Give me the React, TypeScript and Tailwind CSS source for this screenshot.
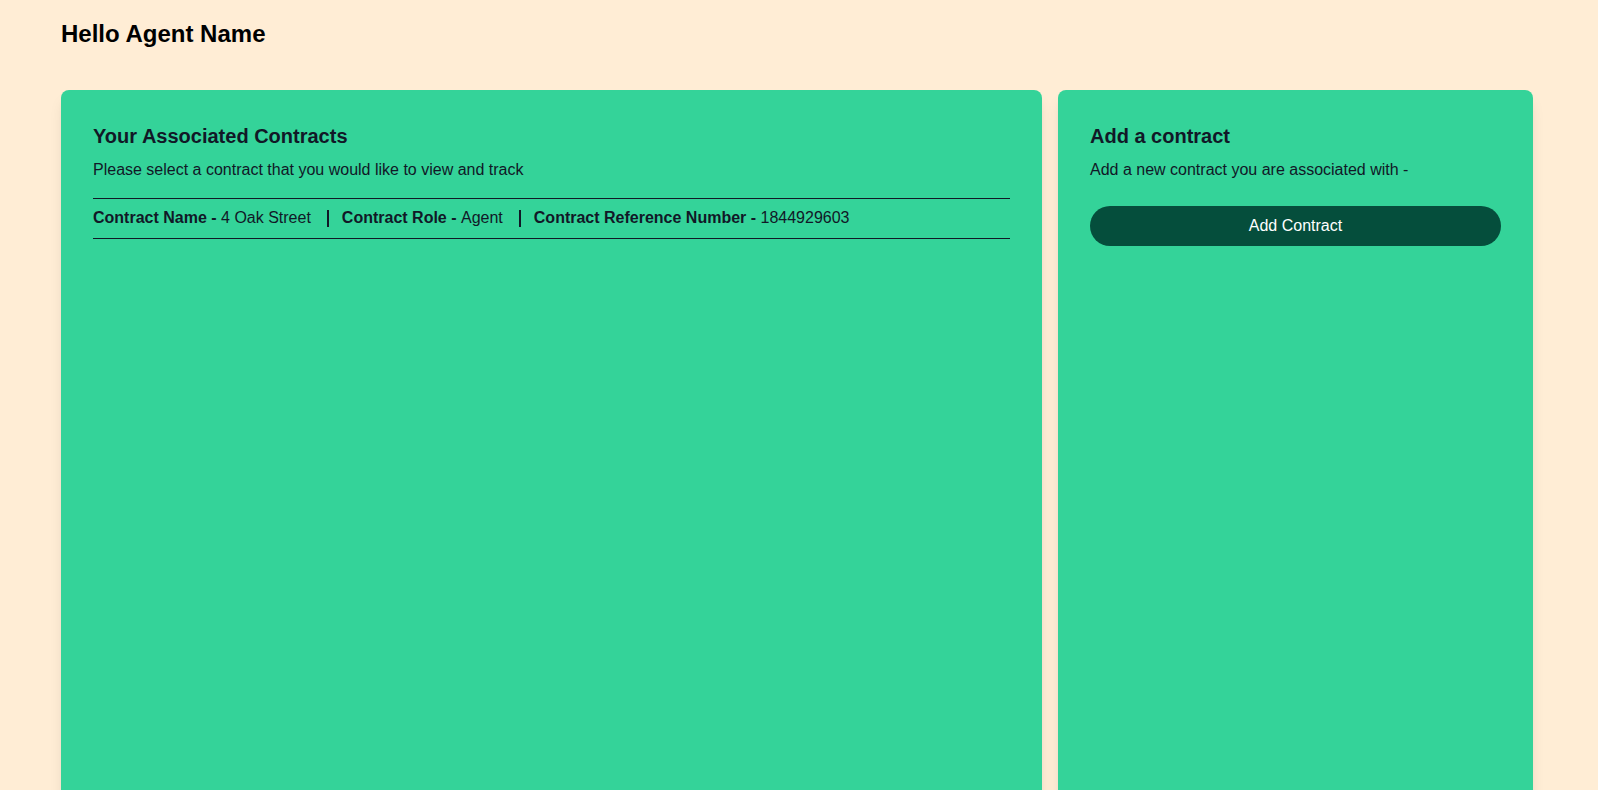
import React from "react";

function Sep() {
  return <span className="ml-[16px] mr-[13px] inline-block h-[17px] w-[2px] bg-[#111827] align-[-4px]" />;
}

export default function App() {
  return (
    <div
      className="h-[790px] overflow-hidden bg-[#ffedd5] px-[61px] pt-[18px]"
      style={{ fontFamily: '"Liberation Sans", Arial, sans-serif' }}
    >
      <h1 className="text-2xl leading-8 font-bold text-black">Hello Agent Name</h1>
      <div className="mt-10 flex gap-4">
        <div className="h-[760px] w-[981px] rounded-lg bg-[#34d399] p-8 shadow-lg">
          <h2 className="text-xl leading-7 font-bold text-[#111827]">Your Associated Contracts</h2>
          <p className="mt-2 text-base leading-6 text-[#111827]">
            Please select a contract that you would like to view and track
          </p>
          <div className="mt-4 border-t border-b border-[#111827] pt-[7px] pb-[8px] text-base leading-6 text-[#111827]">
            <span className="font-bold">Contract Name - </span>
            <span>4 Oak Street</span>
            <Sep />
            <span className="font-bold">Contract Role - </span>
            <span>Agent</span>
            <Sep />
            <span className="font-bold">Contract Reference Number - </span>
            <span>1844929603</span>
          </div>
        </div>
        <div className="h-[760px] w-[475px] rounded-lg bg-[#34d399] p-8 shadow-lg">
          <h2 className="text-xl leading-7 font-bold text-[#111827]">Add a contract</h2>
          <p className="mt-2 text-base leading-6 text-[#111827]">
            Add a new contract you are associated with -
          </p>
          <button className="mt-6 w-full rounded-full bg-[#054e3c] py-2 text-base leading-6 text-white">
            Add Contract
          </button>
        </div>
      </div>
    </div>
  );
}
